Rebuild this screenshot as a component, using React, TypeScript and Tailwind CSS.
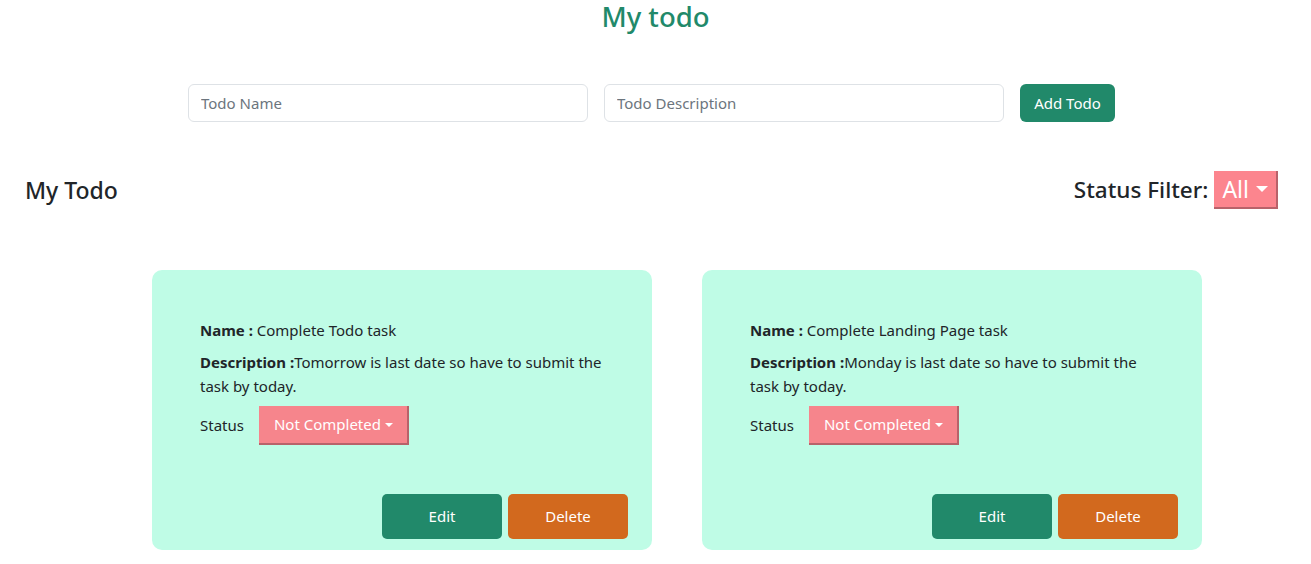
import { useState } from "react";

interface Todo {
  name: string;
  description: string;
  status: string;
}

const todos: Todo[] = [
  {
    name: "Complete Todo task",
    description: "Tomorrow is last date so have to submit the task by today.",
    status: "Not Completed",
  },
  {
    name: "Complete Landing Page task",
    description: "Monday is last date so have to submit the task by today.",
    status: "Not Completed",
  },
];

const Caret = () => (
  <span className="ml-[4px] inline-block border-x-[4px] border-t-[4px] border-x-transparent border-t-white align-middle"></span>
);

const TodoCard = ({ todo }: { todo: Todo }) => (
  <div className="flex h-[280px] w-[500px] flex-col rounded-[10px] bg-[#bffce6] pt-[48px] pb-[11px] pr-[24px] pl-[48px]">
    <div className="pr-[24px]">
      <p className="leading-6">
        <b className="font-bold">Name : </b>
        {todo.name}
      </p>
      <p className="mt-2 leading-6">
        <b className="font-bold">Description :</b>
        {todo.description}
      </p>
      <div className="mt-2 flex items-center gap-[15px]">
        <span>Status</span>
        <button className="flex h-[39px] items-center border-r-2 border-b-2 border-[#b8626a] bg-[#f6858c] pr-[14px] pl-[15px] text-white">
          {todo.status}
          <Caret />
        </button>
      </div>
    </div>
    <div className="mt-auto flex justify-end gap-[6px]">
      <button className="h-[45px] w-[120px] rounded-[5px] bg-[#21896a] text-white">Edit</button>
      <button className="h-[45px] w-[120px] rounded-[5px] bg-[#d2691e] text-white">Delete</button>
    </div>
  </div>
);

export default function App() {
  const [name, setName] = useState("");
  const [desc, setDesc] = useState("");

  return (
    <div className="min-h-screen bg-white text-[15px] text-[#212529] [font-family:'Noto_Sans',sans-serif]">
      <h2 className="text-center text-[27.5px] leading-[33px] font-medium text-[#21896a]">My todo</h2>

      <div className="mt-[51px] flex justify-center gap-[16px] pr-[8px]">
        <input
          className="h-[38px] w-[400px] rounded-[6px] border border-[#dee2e6] px-3 placeholder:text-[#6c757d] focus:outline-none"
          placeholder="Todo Name"
          value={name}
          onChange={(e) => setName(e.target.value)}
        />
        <input
          className="h-[38px] w-[400px] rounded-[6px] border border-[#dee2e6] px-3 placeholder:text-[#6c757d] focus:outline-none"
          placeholder="Todo Description"
          value={desc}
          onChange={(e) => setDesc(e.target.value)}
        />
        <button className="h-[38px] w-[95px] rounded-[6px] bg-[#21896a] text-white">Add Todo</button>
      </div>

      <div className="mt-[49px] flex items-center justify-between pr-[33px] pl-[25px]">
        <h4 className="text-[23px] font-medium">My Todo</h4>
        <div className="flex items-center gap-[6px]">
          <h4 className="text-[22.5px] font-medium">Status Filter:</h4>
          <button className="flex h-[38px] items-center border-r-2 border-b-2 border-[#b8626a] bg-[#fc858e] pr-[8px] pl-[8px] text-[23px] text-white">
            All
            <span className="ml-[7px] inline-block border-x-[6px] border-t-[6px] border-x-transparent border-t-white"></span>
          </button>
        </div>
      </div>

      <div className="mt-[61px] flex gap-[50px] pl-[152px]">
        {todos.map((t, i) => (
          <TodoCard key={i} todo={t} />
        ))}
      </div>
    </div>
  );
}
